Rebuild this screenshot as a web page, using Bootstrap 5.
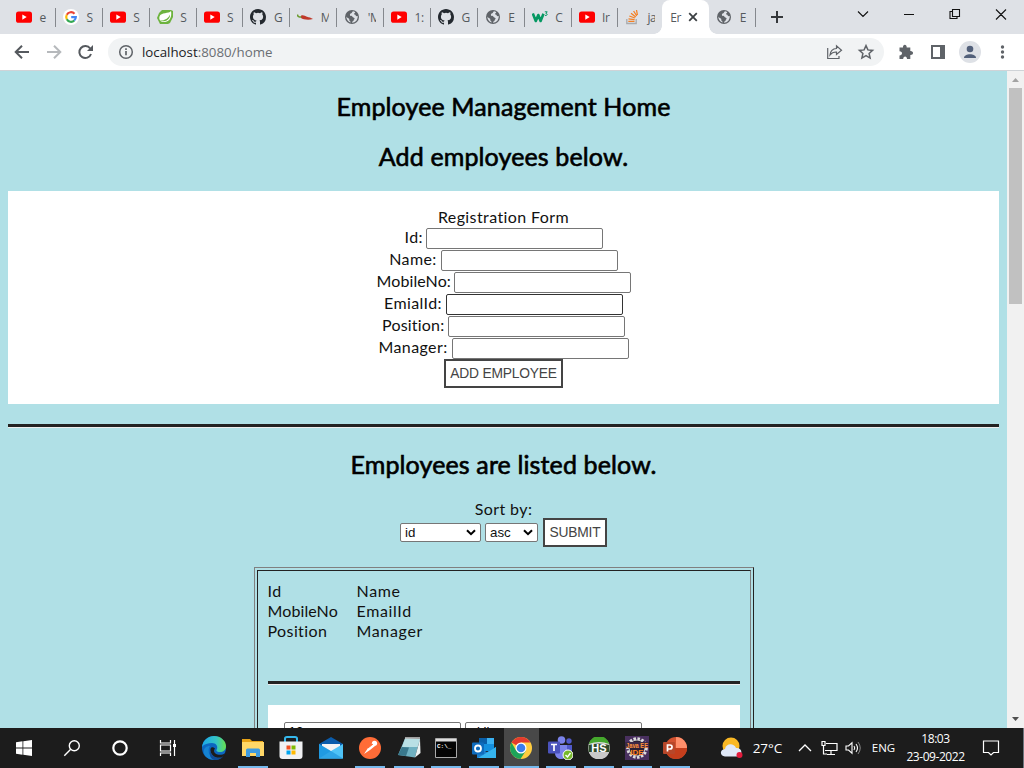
<!DOCTYPE html>
<html lang="en">
<head>
<meta charset="utf-8">
<title>Employee Management Home</title>
<link rel="stylesheet" href="https://cdn.jsdelivr.net/npm/bootstrap@5.3.0/dist/css/bootstrap.min.css">
<style>
html,body{height:100%;overflow:hidden}
body{width:1024px;height:768px;font-family:"Liberation Sans",sans-serif;font-size:13px;line-height:1.2;color:#000;background:#fff}
svg{display:block;flex:none}
.tabstrip{height:34px;background:#dee1e6;padding-left:9px}
.btab{width:46.88px;height:34px;padding-left:7px;position:relative;font:12px "Open Sans",sans-serif;color:#55595d}
.btab::after{content:"";position:absolute;right:0;top:8px;height:19px;width:1px;background:#85888d}
.btab.noline::after{display:none}
.btab .lbl{margin-left:7.5px;white-space:nowrap;letter-spacing:-.3px}
.btab .cut{width:8px;overflow:hidden}
.btab.active{background:#fff;border-radius:8px 8px 0 0;width:47px;margin-left:-3px;padding-left:8px}
.btab.active .lbl{width:11px;margin-left:0}
.btab.active::after{right:-8px;top:auto;bottom:0;width:8px;height:8px;background:radial-gradient(circle at 100% 0,transparent 7.5px,#fff 8px)}
.btab.active::before{content:"";position:absolute;left:-8px;bottom:0;width:8px;height:8px;background:radial-gradient(circle at 0 0,transparent 7.5px,#fff 8px)}
.toolbar{height:37px;background:#fff;border-bottom:1px solid #cfd3d7;padding-left:14px}
.omni{width:776px;height:28px;border-radius:14px;background:#f1f3f4;margin-left:14px;padding:0 8px 0 10px;font:13.3px "Open Sans",sans-serif;color:#6a6e73}
.omni .host{color:#202124}
.view{height:657px}
.doc{width:1007px;background:#b0e0e6;padding:20px 8px 0;overflow:hidden;font-family:Lato,sans-serif;font-size:16px;line-height:20px;letter-spacing:.4px;color:#111}
.doc h2{font-size:25px;font-weight:400;-webkit-text-stroke:.65px #000;color:#000;line-height:30px;height:30px;margin:0 0 20px;letter-spacing:.13px}
.rule{height:4px;background:#222;border-bottom:1px solid #eee}
.panel{background:#fff;padding:16px 0}
.field{height:22px;gap:4px}
.field label{text-align:center;white-space:nowrap;padding-bottom:2px}
.tbox{width:177px;height:21px;border:1px solid #767676;border-radius:2px;background:#fff;padding:2px 4px;font:13.33px/15px "Liberation Sans",sans-serif;color:#000;outline:0}
.tbox.hot{border-color:#333}
.tbox.raised{padding:1px 4px 3px}
.obtn{border:2px solid #444;border-radius:0;background:#fff;color:#444;height:29px;padding:0;font:13.8px/25px "Liberation Sans",sans-serif;letter-spacing:-.2px;white-space:nowrap}
.pick{height:19px;border:1px solid #767676;border-radius:2px;background:#fff;font:13.33px/17px "Liberation Sans",sans-serif;padding:0 4px;letter-spacing:0}
.outer{width:500px;height:240px;border:1px solid;border-color:#808080 #222 #222 #808080;padding:2px;margin-top:20px}
.inner{height:234px;border:1px solid;border-color:#222 #808080 #808080 #222;padding:10px 10px}
.cols{display:grid;grid-template-columns:89px auto}
.cols .wide{letter-spacing:.65px}
.tight{letter-spacing:.1px}
.sbar{width:17px;background:#f1f1f1}
.thumb{width:13px;height:216px;background:#c1c1c1}
.taskbar{height:40px;background:#1c1c1c;color:#fff;font-family:"Open Sans",sans-serif}
.apps{display:grid;grid-template-columns:48px 48px 48px 48px 44px 34px 42px 38px 40px 37px 38px 37px 37px 43px 34px 42px 33px}
.app{height:40px;position:relative;display:flex;align-items:center;justify-content:center}
.open::after{content:"";position:absolute;bottom:0;left:50%;width:30px;margin-left:-15px;height:2px;background:#76b9ed}
.now{background:linear-gradient(#484848,#484848) right/35px 100% no-repeat}.now::after{width:35px;margin-left:-16.5px}
.tray{display:grid;grid-template-columns:28px 43px 32px 16px 32px 29px 75px 36px 28px;padding-left:27px;align-items:center;justify-items:center;flex:1}
</style>
</head>
<body class="d-flex flex-column">
<svg width="0" height="0" class="position-absolute">
<defs>
<symbol id="yt" viewBox="0 0 16 16"><rect y="2.4" width="16" height="11.4" rx="2.6" fill="#f00"/><path d="M6.3 5.500v5.200L10.700 8z" fill="#fff"/></symbol>
<symbol id="gh" viewBox="0 0 16 16"><path fill="#24292f" d="M8 0C3.58 0 0 3.58 0 8c0 3.54 2.29 6.53 5.47 7.59.4.07.55-.17.55-.38 0-.19-.01-.82-.01-1.49-2.01.37-2.53-.49-2.69-.94-.09-.23-.48-.94-.82-1.13-.28-.15-.68-.52-.01-.53.63-.01 1.08.58 1.23.82.72 1.21 1.87.87 2.33.66.07-.52.28-.87.51-1.07-1.78-.2-3.64-.89-3.64-3.95 0-.87.31-1.59.82-2.15-.08-.2-.36-1.02.08-2.12 0 0 .67-.21 2.2.82a7.6 7.6 0 0 1 4 0c1.53-1.04 2.2-.82 2.2-.82.44 1.1.16 1.92.08 2.12.51.56.82 1.27.82 2.15 0 3.07-1.87 3.75-3.65 3.95.29.25.54.73.54 1.48 0 1.07-.01 1.93-.01 2.2 0 .21.15.46.55.38A8 8 0 0 0 16 8c0-4.42-3.58-8-8-8z"/></symbol>
<symbol id="globe" viewBox="0 0 16 16"><circle cx="8" cy="8" r="7" fill="#5f6368"/><path d="M9 2.300c-1.200.6-.6 1.500-1.700 2S5.700 5.200 6 6.300 8 6.300 8.300 7.500s1.700.6 2.200 1.700-.9 1-.8 2.100c-.3 1.100-1.500 1-1.700 2.400A5.800 5.800 0 0 0 13.700 7c-.9.3-1.800.2-2-.6-.3-.9-1.500-.5-1.700-1.300-.1-.9 1-.8 1.200-1.900A6 6 0 0 0 9 2.300zM2.300 7.500c0 3 1.800 5.300 4.300 6 .2-.8-.2-1.200-.9-1.600-.8-.5 0-1.600-.8-2.300C4 9 2.900 8.900 2.300 7.500z" fill="#dee1e6"/></symbol>
</defs>
</svg>

<div class="tabstrip d-flex flex-shrink-0">
<div class="btab d-flex align-items-center"><svg width="16" height="16"><use href="#yt"/></svg><span class="lbl">e</span></div>
<div class="btab d-flex align-items-center"><svg width="16" height="16" viewBox="0 0 16 16"><circle cx="8" cy="8" r="8" fill="#fff"/><g fill="none" stroke-width="2.2"><path d="M3.800 5.700A4.800 4.800 0 0 1 11.500 4.700" stroke="#ea4335"/><path d="M3.800 5.700A4.800 4.800 0 0 0 3.800 10.300" stroke="#fbbc05"/><path d="M3.800 10.300A4.800 4.800 0 0 0 11.300 11.500" stroke="#34a853"/><path d="M8.200 8.200H12.800A4.800 4.800 0 0 1 11.200 11.500" stroke="#4285f4"/></g></svg><span class="lbl">S</span></div>
<div class="btab d-flex align-items-center"><svg width="16" height="16"><use href="#yt"/></svg><span class="lbl">S</span></div>
<div class="btab d-flex align-items-center"><svg width="16" height="16" viewBox="0 0 16 16"><path d="M5 1h9l2 1v6l-3 6-2 1H3L0 9l2-5z" fill="#6db33f"/><path d="M14 2C12 5 4 3 2.500 7.500 1.500 11.500 4.500 13.500 8 13c5-.7 7-5.500 6-11z" fill="#fff"/><path d="M2.500 11.500C7 12 11.500 9.500 13 5.500c.3 4-3 6.500-6 6.800-2 .2-3.500-.2-4.500-.8z" fill="#6db33f"/></svg><span class="lbl">S</span></div>
<div class="btab d-flex align-items-center"><svg width="16" height="16"><use href="#yt"/></svg><span class="lbl">S</span></div>
<div class="btab d-flex align-items-center"><svg width="16" height="16"><use href="#gh"/></svg><span class="lbl">G</span></div>
<div class="btab d-flex align-items-center"><svg width="16" height="16" viewBox="0 0 16 16"><path d="M4 6.800c2-1.300 4 .4 6 1s4 .8 6 2.300c-4 1.200-10 .6-12-1z" fill="#c0392b"/><path d="M.5 5.500c0 2 1.500 2.600 3.800 2.500" stroke="#6a9a2d" stroke-width="1.500" fill="none"/></svg><span class="lbl cut">M</span></div>
<div class="btab d-flex align-items-center"><svg width="16" height="16"><use href="#globe"/></svg><span class="lbl cut">'M</span></div>
<div class="btab d-flex align-items-center"><svg width="16" height="16"><use href="#yt"/></svg><span class="lbl">1:</span></div>
<div class="btab d-flex align-items-center"><svg width="16" height="16"><use href="#gh"/></svg><span class="lbl">G</span></div>
<div class="btab d-flex align-items-center"><svg width="16" height="16"><use href="#globe"/></svg><span class="lbl">E</span></div>
<div class="btab d-flex align-items-center"><svg width="16" height="16" viewBox="0 0 16 16"><path d="M.8 4.500 3.800 12 6.300 6 8.600 12 11.500 4.800" stroke="#059862" stroke-width="2.600" fill="none" stroke-linejoin="round"/><path d="M12.800 2.800h2.400l-1.300 1.700c2 0 1.600 2.500-.9 1.900" stroke="#059862" fill="none"/></svg><span class="lbl">C</span></div>
<div class="btab d-flex align-items-center"><svg width="16" height="16"><use href="#yt"/></svg><span class="lbl">Ir</span></div>
<div class="btab noline d-flex align-items-center"><svg width="16" height="16" viewBox="0 0 16 16"><path d="M1.800 10v4.500h9.400V10" fill="none" stroke="#a9abae" stroke-width="1.300"/><path d="M3.300 12.300h6.200M3.500 9.800l6.100.8M4.300 7l5.700 2M6 4.200l4.800 3.800M8.600 2l3.200 5M11.500 1l.9 5" stroke="#f48024" stroke-width="1.300"/></svg><span class="lbl cut" style="margin-left:5px;padding-left:1px;width:9px">ja</span></div>
<div class="btab active d-flex align-items-center"><span class="lbl">Er</span><svg style="margin-left:7px" width="10" height="10" viewBox="0 0 10 10"><path d="M1.200 1.200 8.800 8.800M8.800 1.200 1.200 8.800" stroke="#3c4043" stroke-width="1.800"/></svg></div>
<div class="btab d-flex align-items-center"><svg width="16" height="16"><use href="#globe"/></svg><span class="lbl">E</span></div>
<svg class="mt-1" style="margin-left:14px" width="14" height="26" viewBox="0 0 14 26"><path d="M1 13h12M7 7v12" stroke="#35383b" stroke-width="2"/></svg>
<div class="d-flex align-items-center ms-auto" style="height:29px">
<svg width="173" height="29" viewBox="0 0 173 29"><g fill="none" stroke="#111" stroke-width="1.100"><path d="M7 11.500 12 16.500 17 11.500M53 14.500h10M101.500 11.500h-2.500v7h7V16M101.500 9.500h7v7h-7zM145 9.500l10 10M155 9.500l-10 10"/></g></svg>
</div>
</div>

<div class="toolbar d-flex align-items-center flex-shrink-0">
<svg width="80" height="16" viewBox="0 0 80 16"><g fill="none" stroke-width="2"><path d="M15 8H2M8 1.700 1.700 8 8 14.300" stroke="#55595e"/><path d="M33 8h13M40 1.700 46.300 8 40 14.300" stroke="#b6b9bc"/><path d="M77 10A6 6 0 1 1 76.200 4.500" stroke="#55595e"/></g><path d="M79 1v6h-6z" fill="#55595e"/></svg>
<div class="omni d-flex align-items-center"><svg width="16" height="16" viewBox="0 0 16 16"><circle cx="8" cy="8" r="6.300" fill="none" stroke="#5f6368" stroke-width="1.500"/><path d="M8 7v4.300M8 4.300v1.600" stroke="#5f6368" stroke-width="1.700"/></svg>
<span class="ms-2"><span class="host">localhost</span>:8080/home</span>
<svg class="ms-auto" width="50" height="18" viewBox="0 0 50 18"><g fill="none" stroke="#5f6368" stroke-width="1.200"><path d="M1.700 5v10.500H13V13M4 12c.4-4.300 3-6.300 6.500-6.500V2.800L15.500 7.200l-5 4.200V9C7.500 8.800 5.500 10 4 12z"/><path stroke-width="1.500" d="M40 2.600l1.900 4.300 4.700.5-3.500 3.100 1 4.600-4.100-2.400-4.100 2.400 1-4.600-3.500-3.100 4.700-.5z"/></g></svg></div>
<svg style="margin-left:14px" width="112" height="24" viewBox="0 0 112 24"><path d="M1.500 7.500H5C4.600 3.800 9 3.800 8.700 7.500h3.600V11c3.700-.2 3.700 4.200 0 4v4H9c.2-3.400-4-3.400-3.800 0H1.500v-3.500c3.400 0 3.400-4.200 0-4.200z" fill="#5f6368"/><path d="M34 6h12v12H34z" fill="none" stroke="#5f6368" stroke-width="2"/><path d="M42 6h5v12h-5z" fill="#5f6368"/><circle cx="72" cy="12" r="11" fill="#dee1e6"/><circle cx="72" cy="9" r="3.300" fill="#52607a"/><path d="M66 18c0-5 12-5 12 0z" fill="#52607a"/><g fill="#5f6368"><circle cx="104.500" cy="7" r="1.700"/><circle cx="104.500" cy="12" r="1.700"/><circle cx="104.500" cy="17" r="1.700"/></g></svg>
</div>

<div class="view d-flex flex-shrink-0">
<div class="doc">
<h2 class="text-center">Employee Management Home</h2>
<h2 class="text-center">Add employees below.</h2>
<div class="panel text-center">
<div>Registration Form</div>
<div class="field d-flex justify-content-center align-items-center"><label style="width:17px">Id:</label><input class="tbox"></div>
<div class="field d-flex justify-content-center align-items-center"><label style="width:48px">Name:</label><input class="tbox"></div>
<div class="field d-flex justify-content-center align-items-center"><label class="tight" style="width:73px">MobileNo:</label><input class="tbox"></div>
<div class="field d-flex justify-content-center align-items-center"><label style="width:58px">EmialId:</label><input class="tbox hot"></div>
<div class="field d-flex justify-content-center align-items-center"><label style="width:62px;letter-spacing:.2px">Position:</label><input class="tbox"></div>
<div class="field d-flex justify-content-center align-items-center"><label style="width:70px">Manager:</label><input class="tbox"></div>
<button class="obtn d-block mx-auto" style="width:119px">ADD EMPLOYEE</button>
</div>
<div class="rule" style="margin:20px 0 21px"></div>
<h2 class="text-center">Employees are listed below.</h2>
<div class="text-center" style="height:19px;line-height:19px">Sort by:</div>
<div class="d-flex justify-content-center align-items-center">
<div class="pick d-flex align-items-center justify-content-between" style="width:81px">id<svg width="10" height="7" viewBox="0 0 10 7"><path d="M1 1.200 5 5.200 9 1.200" fill="none" stroke="#000" stroke-width="2"/></svg></div>
<div class="pick d-flex align-items-center justify-content-between" style="width:53px;margin:0 5px 0 4px">asc<svg width="10" height="7" viewBox="0 0 10 7"><path d="M1 1.200 5 5.200 9 1.200" fill="none" stroke="#000" stroke-width="2"/></svg></div>
<button class="obtn" style="width:64px">SUBMIT</button>
</div>
<div class="outer mx-auto">
<div class="inner">
<div class="cols"><span>Id</span><span class="wide">Name</span><span class="tight">MobileNo</span><span class="wide">EmailId</span><span>Position</span><span class="wide">Manager</span></div>
<div class="rule" style="margin:40px 0 20px"></div>
<div class="panel d-flex px-3 gap-1" style="height:60px;padding-top:17px"><input class="tbox raised" value="12"><input class="tbox raised" value="akil"></div>
</div>
</div>
</div>
<div class="sbar d-flex flex-column align-items-center justify-content-between">
<div><svg width="13" height="17" viewBox="0 0 13 17"><path d="M3 11h7L6.500 7z" fill="#a3a3a3"/></svg><div class="thumb"></div></div>
<svg width="13" height="17" viewBox="0 0 13 17"><path d="M3 6h7L6.500 10z" fill="#505050"/></svg>
</div>
</div>

<div class="taskbar d-flex flex-shrink-0">
<div class="apps">
<div class="app"><svg width="16" height="16" viewBox="0 0 16 16"><path d="M0 2.200 6.500 1.300v6.200H0zM7.300 1.200 16 0v7.500H7.300zM0 8.400h6.500v6.300L0 13.800zM7.300 8.400H16V16l-8.700-1.200z" fill="#fff"/></svg></div>
<div class="app"><svg width="18" height="18" viewBox="0 0 18 18"><circle cx="11.300" cy="6.700" r="5" fill="none" stroke="#fff" stroke-width="1.400"/><path d="M7.700 10.300 1.300 16.700" stroke="#fff" stroke-width="1.400"/></svg></div>
<div class="app"><svg width="18" height="18" viewBox="0 0 18 18"><circle cx="9" cy="9" r="6.700" fill="none" stroke="#fff" stroke-width="2.200"/></svg></div>
<div class="app"><svg width="18" height="18" viewBox="0 0 18 18"><path d="M1.500 1v3h10V1M1.500 17v-3h10v3M1.500 6h10v6h-10zM15.500 1v16" fill="none" stroke="#fff" stroke-width="1.200"/><path d="M14 5h3v3h-3z" fill="#fff"/></svg></div>
<div class="app"><svg width="24" height="24" viewBox="0 0 24 24"><defs><linearGradient id="ea" x2="1"><stop stop-color="#1ba6e8"/><stop offset=".6" stop-color="#35c4c4"/><stop offset="1" stop-color="#67e04d"/></linearGradient></defs><circle cx="12" cy="12" r="12" fill="#0c66c0"/><path d="M0 11C1 4 6 0 12 0c7 0 12 5 12 10 0 4-3 6-6 6-4 0-4-2-3-3 1-3-1-6-5-6C6 7 2 8 0 11z" fill="url(#ea)"/><path d="M8.500 13c-1 6 5 10 11 8.500 2-1 3.200-3 3.500-4.300-2 1.500-5 2-7.500 1.200-4-1.300-4-4-2.500-6-2-1.500-4-1.500-4.500.6z" fill="#1c1c1c"/><path d="M8 10c-3 4-1 12 6 13.800-3 .4-8-.5-11-4C0 14 3 10 8 10z" fill="#1583d2"/><path d="M8.500 14c0 5 5 9 11 7.500l2-1.500c-2 3-6 4.500-9.500 4-4-1.500-5-6-3.500-10z" fill="#0f4d98"/></svg></div>
<div class="app open"><svg width="22" height="20" viewBox="0 0 22 20"><path d="M0 1h8l2 2h11v15H0z" fill="#e8a317"/><path d="M0 4h22v14H0z" fill="#ffd767"/><path d="M4 19v-7q0-1.500 1.500-1.500h11q1.500 0 1.500 1.500v7h-4v-4H8v4z" fill="#3e9be0"/></svg></div>
<div class="app"><svg width="24" height="24" viewBox="0 0 24 24"><path d="M6 7V2.500Q6 1 8 1h8q2 0 2 1.500V7" fill="none" stroke="#35b8ec" stroke-width="2"/><path d="M.5 5.500h23V20q0 3-3 3h-17q-3 0-3-3z" fill="#f0f1f3"/><path d="M7.500 9.500h4v4h-4z" fill="#f25022"/><path d="M12.500 9.500h4v4h-4z" fill="#7fba00"/><path d="M7.500 14.500h4v4h-4z" fill="#00a4ef"/><path d="M12.500 14.500h4v4h-4z" fill="#ffb900"/></svg></div>
<div class="app"><svg width="24" height="24" viewBox="0 0 24 24"><path d="M0 8 12 1l12 7v3H0z" fill="#0b5cab"/><path d="M3 8h18v7H3z" fill="#f4f4f4"/><path d="M0 8 24 22.500H0z" fill="#28a8ea"/><path d="M24 8v14.500H0L12 15z" fill="#4fc3f7"/><path d="M0 8v14.500h24L12 15z" fill="#1a91dc" opacity=".6"/></svg></div>
<div class="app open"><svg width="22" height="22" viewBox="0 0 22 22"><circle cx="11" cy="11" r="11" fill="#ff6c37"/><path d="M5 17l4-6 5-4 2 2-5 4z" fill="#fff"/><circle cx="15.500" cy="6.300" r="2.600" fill="#fff"/><path d="m9 11 5-4" stroke="#ff6c37"/></svg></div>
<div class="app open"><svg width="24" height="24" viewBox="0 0 24 24"><path d="M8 2.500 23 3l-5 18.500L1 19z" fill="#6fb1c1"/><path d="M8 2.500 23 3l-2.500 8L5 11z" fill="#b9e0e5"/><path d="M1 19l4-8 7 .5L9 20z" fill="#39788c"/><path d="M18 21.500 23 3l.5 14z" fill="#eef4f4"/><path d="M8 2h15" stroke="#ccc" stroke-width="1.500"/></svg></div>
<div class="app open"><svg width="22" height="20" viewBox="0 0 22 20"><path d="M.5.500h21v19H.5z" fill="#050505" stroke="#aaa"/><path d="M1 1h20v2.500H1z" fill="#ddd"/><text x="2" y="10" font-family="Liberation Mono" font-size="6" font-weight="700" fill="#fff">C:\_</text></svg></div>
<div class="app open"><svg width="24" height="22" viewBox="0 0 24 22"><path d="M7 1h15v13H7z" fill="#1490df"/><path d="M7 1h8v6H7z" fill="#0a5fa8"/><path d="M15 1h7v6h-7z" fill="#3bb2f2"/><path d="M5 10l10 5 9-5v11H5z" fill="#1d80ce"/><path d="M24 10v11H6z" fill="#35b4ee"/><rect y="5.500" width="12" height="12" rx="1" fill="#0f6cbd"/><circle cx="6" cy="11.500" r="3" fill="none" stroke="#fff" stroke-width="1.800"/></svg></div>
<div class="app open now"><svg width="22" height="22" viewBox="0 0 22 22"><circle cx="11" cy="11" r="11" fill="#ffcd40"/><path d="M11 11 1.500 5.500A11 11 0 0 1 20.500 5.500H11z" fill="#e33b2e"/><path d="M1.500 5.500A11 11 0 0 0 10.500 22L15.800 13.800 6.200 13.800z" fill="#1da35a"/><circle cx="11" cy="11" r="5.500" fill="#fff"/><circle cx="11" cy="11" r="4.300" fill="#3b7ded"/></svg></div>
<div class="app open"><svg width="25" height="24" viewBox="0 0 25 24"><circle cx="13.500" cy="4" r="3.800" fill="#7b83eb"/><circle cx="21" cy="5" r="2.700" fill="#5059c9"/><path d="M17 9h7v7q-1 4-6 3z" fill="#5059c9"/><path d="M7 9h12v8c0 8-12 8-12 0z" fill="#7b83eb"/><rect y="5.500" width="12" height="12" rx="1" fill="#4b53bc"/><path d="M3 8.500h6M6 8.500v6.500" stroke="#fff" stroke-width="1.700"/><circle cx="20" cy="19" r="5" fill="#76b82a" stroke="#fff"/><path d="m17.500 19 2 2 3-4" stroke="#fff" stroke-width="1.400" fill="none"/></svg></div>
<div class="app open"><svg width="22" height="22" viewBox="0 0 22 22"><circle cx="11" cy="11" r="11" fill="#ddd"/><path d="M.8 7a10.500 10.500 0 0 1 20.400 0q-10-4-20.400 0z" fill="#45a82c"/><path d="M1 15a10.500 10.500 0 0 0 20 0z" fill="#c9c9c9"/><path d="M.5 8Q11 5 21.500 8v7h-21z" fill="#2f4a2a"/><text x="11" y="14.800" text-anchor="middle" font-family="Liberation Sans" font-size="11" font-weight="700" fill="#fff">HS</text></svg></div>
<div class="app open"><svg width="24" height="24" viewBox="0 0 24 24"><path d="M0 0h24v24H0z" fill="#49305f"/><circle cx="12" cy="12" r="9.300" fill="none" stroke="#ddd" stroke-width="3" stroke-dasharray="2.500 1.500"/><circle cx="12" cy="12" r="8" fill="#2a2035" stroke="#ccc"/><path d="M0 6h24v6H0z" fill="#3a2848"/><text x="12" y="11.500" text-anchor="middle" font-family="Liberation Sans" font-size="7" font-weight="700" fill="#ff9138" textLength="22" lengthAdjust="spacingAndGlyphs">Java EE</text><text x="12" y="18.500" text-anchor="middle" font-family="Liberation Sans" font-size="8" font-weight="700" fill="#ff8420">IDE</text></svg></div>
<div class="app open"><svg width="24" height="22" viewBox="0 0 24 22"><circle cx="13" cy="11" r="11" fill="#d35230"/><path d="M13 0a11 11 0 0 1 11 11H13z" fill="#ff8f6b"/><path d="M2 11h22a11 11 0 0 1-22 0z" fill="#c43e1c"/><rect y="5" width="12" height="12" rx="1" fill="#b7472a"/><path d="M4.500 14.500V8h2.300c3 0 3 4 0 4H4.500" fill="none" stroke="#fff" stroke-width="1.700"/></svg></div>
</div>
<div class="tray">
<svg width="24" height="22" viewBox="0 0 24 22"><circle cx="11" cy="9" r="8.500" fill="#f9b824"/><path d="M5 19.500C-.5 19-.5 12.500 5 12c1-6 9-6 11-1 7-.5 7 8 1 8.500z" fill="#dfe8f7"/><circle cx="19.500" cy="18" r="3" fill="#e21b3c"/></svg>
<span style="font-size:13.5px">27°C</span>
<svg width="14" height="8" viewBox="0 0 14 8"><path d="m1 7 6-6 6 6" stroke="#fff" fill="none" stroke-width="1.300"/></svg>
<svg width="17" height="16" viewBox="0 0 17 16"><path d="M5 3.500h11v7H4M10 10.500V14M6 14.500h8M1 1.500h3v4H1zM2.500 5.500V14H6" fill="none" stroke="#fff" stroke-width="1.200"/></svg>
<svg width="16" height="16" viewBox="0 0 16 16"><path d="M1 6h2.500L7 2.800v10.400L3.500 10H1zM9 6q1.500 2 0 4M11 4q3 4 0 8" fill="none" stroke="#fff" stroke-width="1.100"/><path d="M13 2q4.500 6 0 12" fill="none" stroke="#888"/></svg>
<span style="font-size:11.5px">ENG</span>
<div class="text-center" style="font-size:12px;line-height:18px;letter-spacing:-.45px;white-space:nowrap">18:03<br>23-09-2022</div>
<svg width="18" height="18" viewBox="0 0 18 18"><path d="M1.500 2h15v11.500h-5L9 16l-2.500-2.500h-5z" fill="none" stroke="#fff" stroke-width="1.200"/></svg>
<div class="h-100 border-start border-secondary"></div>
</div>
</div>
<script src="https://cdn.jsdelivr.net/npm/bootstrap@5.3.0/dist/js/bootstrap.bundle.min.js"></script>
</body>
</html>
